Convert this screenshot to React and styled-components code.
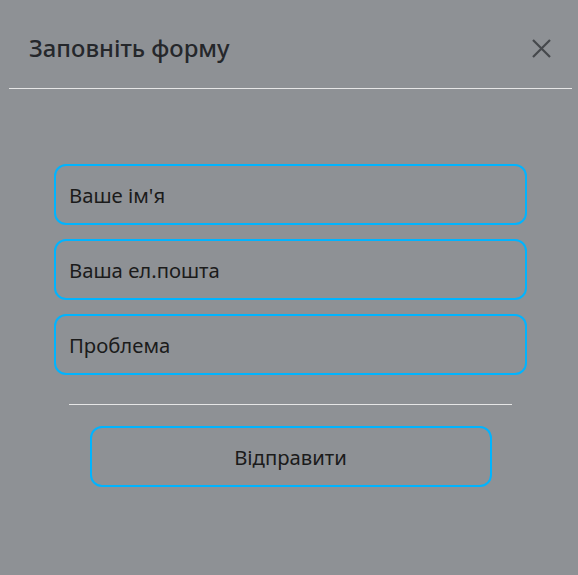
import React from "react";
import styled, { createGlobalStyle } from "styled-components";

const Global = createGlobalStyle`
  html, body { margin: 0; padding: 0; background: #8e9195; }
  body { font-family: "Noto Sans", "Open Sans", sans-serif; }
  * { box-sizing: border-box; }
`;

const Page = styled.div`
  width: 578px;
  height: 575px;
  background: #8e9195;
  display: flex;
  flex-direction: column;
`;

const Header = styled.div`
  margin: 0 6px 0 9px;
  height: 89px;
  padding: 8px 21px 0 20px;
  display: flex;
  align-items: center;
  justify-content: space-between;
  border-bottom: 1px solid #e6e6e6;
`;

const Title = styled.h5`
  margin: 0;
  font-size: 23.8px;
  font-weight: 500;
  color: #25272b;
`;

const Close = styled.button`
  background: none;
  border: none;
  padding: 0;
  width: 19px;
  height: 19px;
  display: flex;
  align-items: center;
  justify-content: center;
  cursor: pointer;
`;

const Form = styled.form`
  display: flex;
  flex-direction: column;
  align-items: center;
  padding: 75px 51px 0 54px;
`;

const Fields = styled.div`
  width: 100%;
  display: flex;
  flex-direction: column;
  gap: 14px;
`;

const Field = styled.input`
  width: 100%;
  height: 61px;
  border: 2px solid #00b4ff;
  border-radius: 12px;
  background: transparent;
  padding: 0 13px;
  font-family: "Noto Sans", "Open Sans", sans-serif;
  font-size: 20.3px;
  color: #1b1b1b;
  outline: none;
  &::placeholder { color: #1b1b1b; opacity: 1; }
`;

const Divider = styled.hr`
  width: 443px;
  border: none;
  border-top: 1px solid #e6e6e6;
  margin: 29px 0 21px 0;
`;

const Submit = styled.button`
  width: 402px;
  height: 61px;
  border: 2px solid #00b4ff;
  border-radius: 12px;
  background: transparent;
  font-family: "Noto Sans", "Open Sans", sans-serif;
  font-size: 20.3px;
  color: #1b1b1b;
  cursor: pointer;
`;

export default function App() {
  return (
    <Page>
      <Global />
      <Header>
        <Title>Заповніть форму</Title>
        <Close aria-label="close">
          <svg width="19" height="19" viewBox="0 0 19 19">
            <path d="M1 1 L18 18 M18 1 L1 18" stroke="#45484c" strokeWidth="2.2" />
          </svg>
        </Close>
      </Header>
      <Form onSubmit={(e) => e.preventDefault()}>
        <Fields>
          <Field placeholder="Ваше ім'я" />
          <Field placeholder="Ваша ел.пошта" />
          <Field placeholder="Проблема" />
        </Fields>
        <Divider />
        <Submit type="submit">Відправити</Submit>
      </Form>
    </Page>
  );
}
